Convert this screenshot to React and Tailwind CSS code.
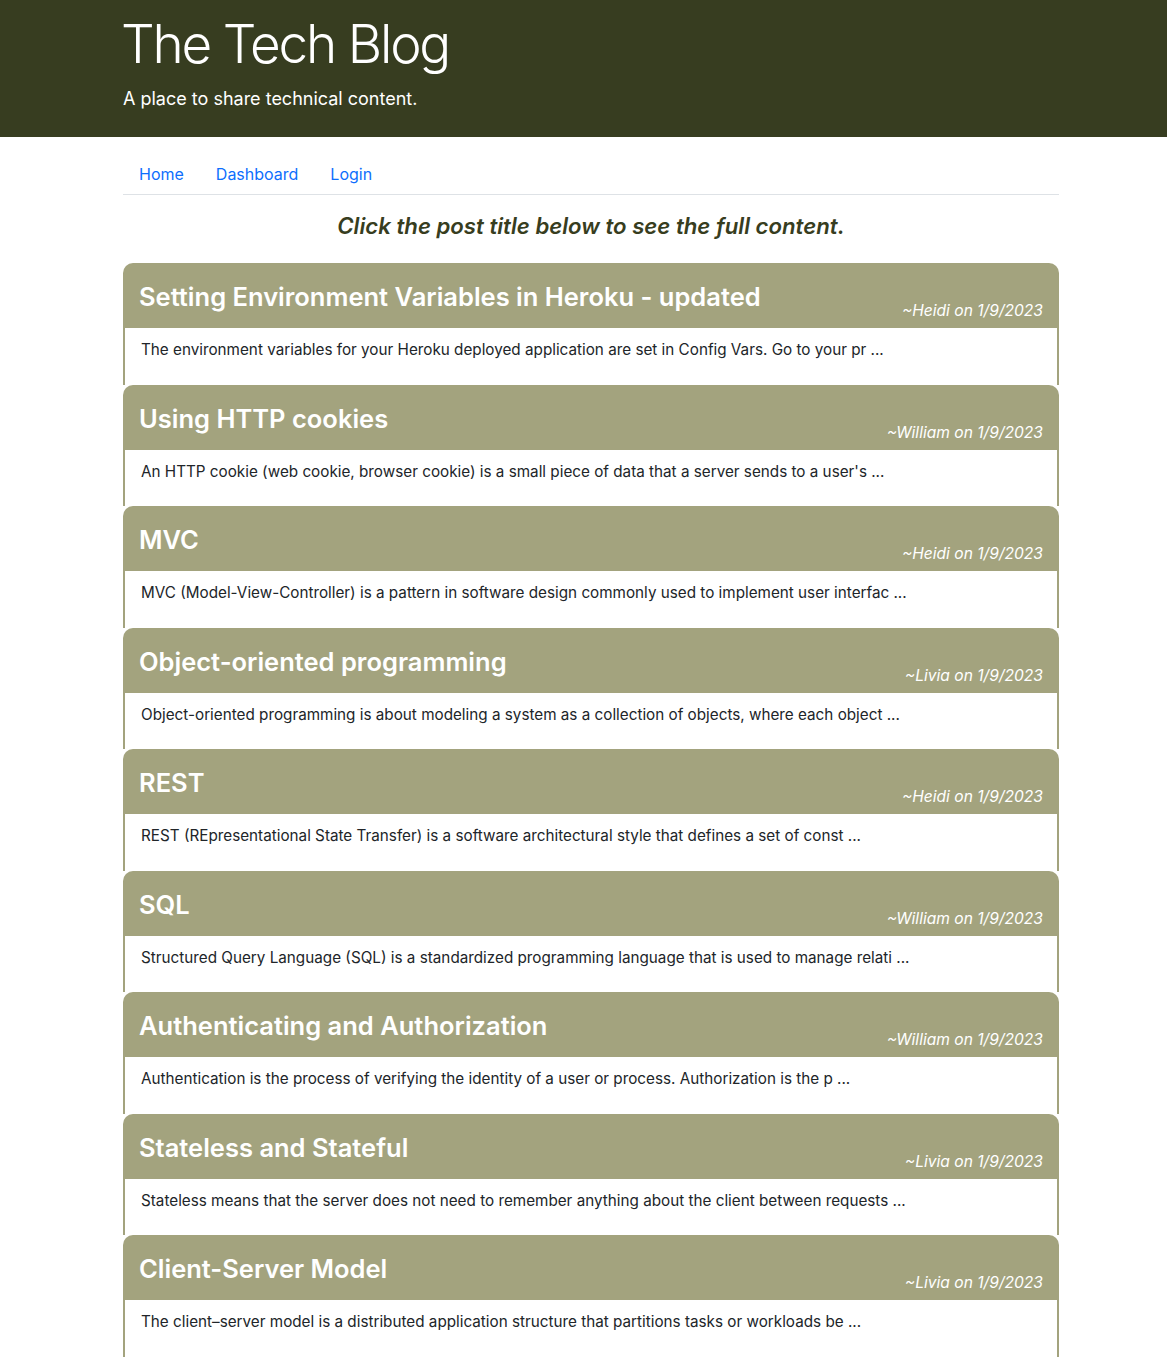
import React from "react";

const posts = [
  { title: "Setting Environment Variables in Heroku - updated", author: "Heidi", body: "The environment variables for your Heroku deployed application are set in Config Vars. Go to your pr ..." },
  { title: "Using HTTP cookies", author: "William", body: "An HTTP cookie (web cookie, browser cookie) is a small piece of data that a server sends to a user's ..." },
  { title: "MVC", author: "Heidi", body: "MVC (Model-View-Controller) is a pattern in software design commonly used to implement user interfac ..." },
  { title: "Object-oriented programming", author: "Livia", body: "Object-oriented programming is about modeling a system as a collection of objects, where each object ..." },
  { title: "REST", author: "Heidi", body: "REST (REpresentational State Transfer) is a software architectural style that defines a set of const ..." },
  { title: "SQL", author: "William", body: "Structured Query Language (SQL) is a standardized programming language that is used to manage relati ..." },
  { title: "Authenticating and Authorization", author: "William", body: "Authentication is the process of verifying the identity of a user or process. Authorization is the p ..." },
  { title: "Stateless and Stateful", author: "Livia", body: "Stateless means that the server does not need to remember anything about the client between requests ..." },
  { title: "Client-Server Model", author: "Livia", body: "The client\u2013server model is a distributed application structure that partitions tasks or workloads be ..." },
];

export default function App() {
  return (
    <div className="min-h-screen bg-white text-[#212529]" style={{ fontFamily: "Inter, 'Noto Sans', sans-serif" }}>
      <header className="bg-[#373d20] h-[137px]">
        <div className="ml-[123px] w-[936px] pt-[11px]">
          <h1 className="-ml-[2px] text-[53px] font-light leading-[66px] text-white tracking-[-2.2px]">The Tech Blog</h1>
          <p className="mt-[8px] text-[18px] leading-[27px] text-white">A place to share technical content.</p>
        </div>
      </header>
      <main className="ml-[123px] w-[936px]">
        <nav className="mt-[17px] flex border-b border-[#dee2e6] h-[41px] items-center">
          <a className="px-4 text-[16px] text-[#0d6efd]" href="#">Home</a>
          <a className="px-4 text-[16px] text-[#0d6efd]" href="#">Dashboard</a>
          <a className="px-4 text-[16px] text-[#0d6efd]" href="#">Login</a>
        </nav>
        <h2 className="text-center text-[22.2px] font-semibold italic text-[#373d20] leading-[30px] mt-[16px] mb-[22px]">
          Click the post title below to see the full content.
        </h2>
        <div className="flex flex-col">
          {posts.map((p, i) => (
            <div key={i} className="flex flex-col">
              <div className="h-[65px] bg-[#a3a37e] rounded-t-[10px] flex justify-between px-4">
                <h3 className="pt-[18px] text-[25.5px] font-semibold leading-[31px] text-white">{p.title}</h3>
                <p className="self-end mb-[5px] text-[15.6px] italic leading-6 text-white">~{p.author} on 1/9/2023</p>
              </div>
              <div className="h-[56.5px] border-x-2 border-[#a3a37e] px-4 pt-[10px]">
                <p className="text-[15.25px] leading-6 text-[#212529]">{p.body}</p>
              </div>
            </div>
          ))}
        </div>
      </main>
    </div>
  );
}
